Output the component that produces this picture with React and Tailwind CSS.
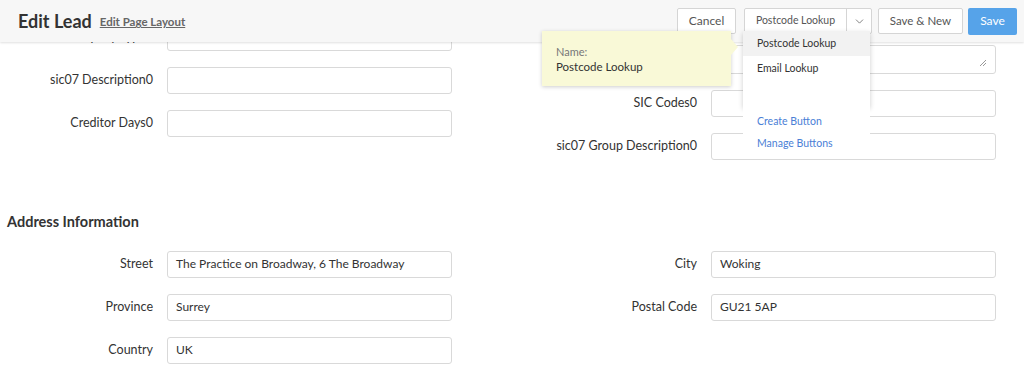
import React from "react";
import { ChevronDown } from "lucide-react";

function Field({ label, value, textarea }) {
  return (
    <div className="flex items-center">
      <div className="w-[153px] shrink-0 text-right text-[12.5px] text-[#333] leading-none">{label}</div>
      <div
        className={
          "ml-[14px] w-[285px] shrink-0 rounded-[3px] border border-[#d9d9d9] bg-white px-2 text-[12px] text-[#333] flex items-center relative " +
          (textarea ? "h-[29px]" : "h-[27px]")
        }
      >
        {value}
        {textarea && (
          <svg className="absolute right-[8px] bottom-[6px]" width="8" height="8" viewBox="0 0 8 8">
            <path d="M7 1 L1 7 M7 4 L4 7" stroke="#999" strokeWidth="1" />
          </svg>
        )}
      </div>
    </div>
  );
}

export default function App() {
  return (
    <div className="relative h-[388px] w-full overflow-hidden bg-white" style={{ fontFamily: "Lato, 'Open Sans', sans-serif" }}>
      {/* content */}
      <div className="pt-[24px]">
        <div className="flex">
          <div className="w-[544px] shrink-0 flex flex-col gap-4">
            <Field label="Company Type0" value="" />
            <Field label="sic07 Description0" value="" />
            <Field label="Creditor Days0" value="" />
          </div>
          <div className="flex flex-col gap-4 pt-[21px]">
            <Field label="" value="" textarea />
            <Field label="SIC Codes0" value="" />
            <Field label="sic07 Group Description0" value="" />
          </div>
        </div>

        <h2 className="mt-[55px] pl-[7px] text-[14.5px] font-bold text-[#333] leading-none">Address Information</h2>

        <div className="mt-[21px] flex">
          <div className="w-[544px] shrink-0 flex flex-col gap-4">
            <Field label="Street" value="The Practice on Broadway, 6 The Broadway" />
            <Field label="Province" value="Surrey" />
            <Field label="Country" value="UK" />
          </div>
          <div className="flex flex-col gap-4">
            <Field label="City" value="Woking" />
            <Field label="Postal Code" value="GU21 5AP" />
          </div>
        </div>
      </div>

      {/* sticky header */}
      <div className="absolute left-0 right-0 top-0 z-10 flex h-[42px] items-center bg-[#f7f7f7] pl-[18px] pr-[7px] shadow-[0_1px_2px_rgba(0,0,0,0.12)]">
        <div className="text-[18px] font-bold text-[#333]">Edit Lead</div>
        <div className="ml-[8px] mt-[2px] text-[11.5px] font-bold text-[#666] underline">Edit Page Layout</div>
        <div className="ml-auto flex items-center">
          <button className="h-[26px] w-[59px] rounded-[2px] border border-[#d5d5d5] bg-white text-[12px] text-[#555]">Cancel</button>
          <div className="ml-[8px] flex h-[26px] w-[128px] rounded-[2px] border border-[#d5d5d5] bg-white">
            <div className="flex flex-1 items-center justify-center text-[10.5px] text-[#555]">Postcode Lookup</div>
            <div className="flex w-[25px] items-center justify-center border-l border-[#d5d5d5]">
              <ChevronDown size={13} strokeWidth={1.5} color="#666" />
            </div>
          </div>
          <button className="ml-[6px] h-[26px] w-[85px] rounded-[2px] border border-[#d5d5d5] bg-white text-[11.5px] text-[#555]">Save &amp; New</button>
          <button className="ml-[5px] h-[27px] w-[49px] rounded-[2px] bg-[#56a3e9] text-[12px] text-white">Save</button>
        </div>
      </div>

      {/* tooltip */}
      <div className="absolute left-[542px] top-[31px] z-20 h-[55px] w-[189px] bg-[#f9f9d7] pl-[14px] pt-[13px] shadow-[0_1px_4px_rgba(0,0,0,0.2)]">
        <div className="text-[11px] leading-[15px] text-[#777]">Name:</div>
        <div className="text-[11.5px] leading-[15px] text-[#333]">Postcode Lookup</div>
        <div className="absolute right-[-7px] top-[8px] h-0 w-0 border-y-[8px] border-l-[7px] border-y-transparent border-l-[#f9f9d7]" />
      </div>

      {/* dropdown */}
      <div className="absolute left-[743px] top-[31px] z-20 w-[127px]">
        <div className="h-[76px] bg-white shadow-[0_2px_5px_rgba(0,0,0,0.2)]">
          <div className="flex h-[25px] items-center bg-[#f2f2f2] pl-[14px] text-[10.5px] text-[#333]">Postcode Lookup</div>
          <div className="flex h-[25px] items-center pl-[14px] text-[10.5px] text-[#333]">Email Lookup</div>
        </div>
        <div className="h-[52px] bg-white pl-[14px] pt-[7px]">
          <div className="text-[10.5px] leading-[14px] text-[#4a80d6]">Create Button</div>
          <div className="mt-[8px] text-[10.5px] leading-[14px] text-[#4a80d6]">Manage Buttons</div>
        </div>
      </div>
    </div>
  );
}
